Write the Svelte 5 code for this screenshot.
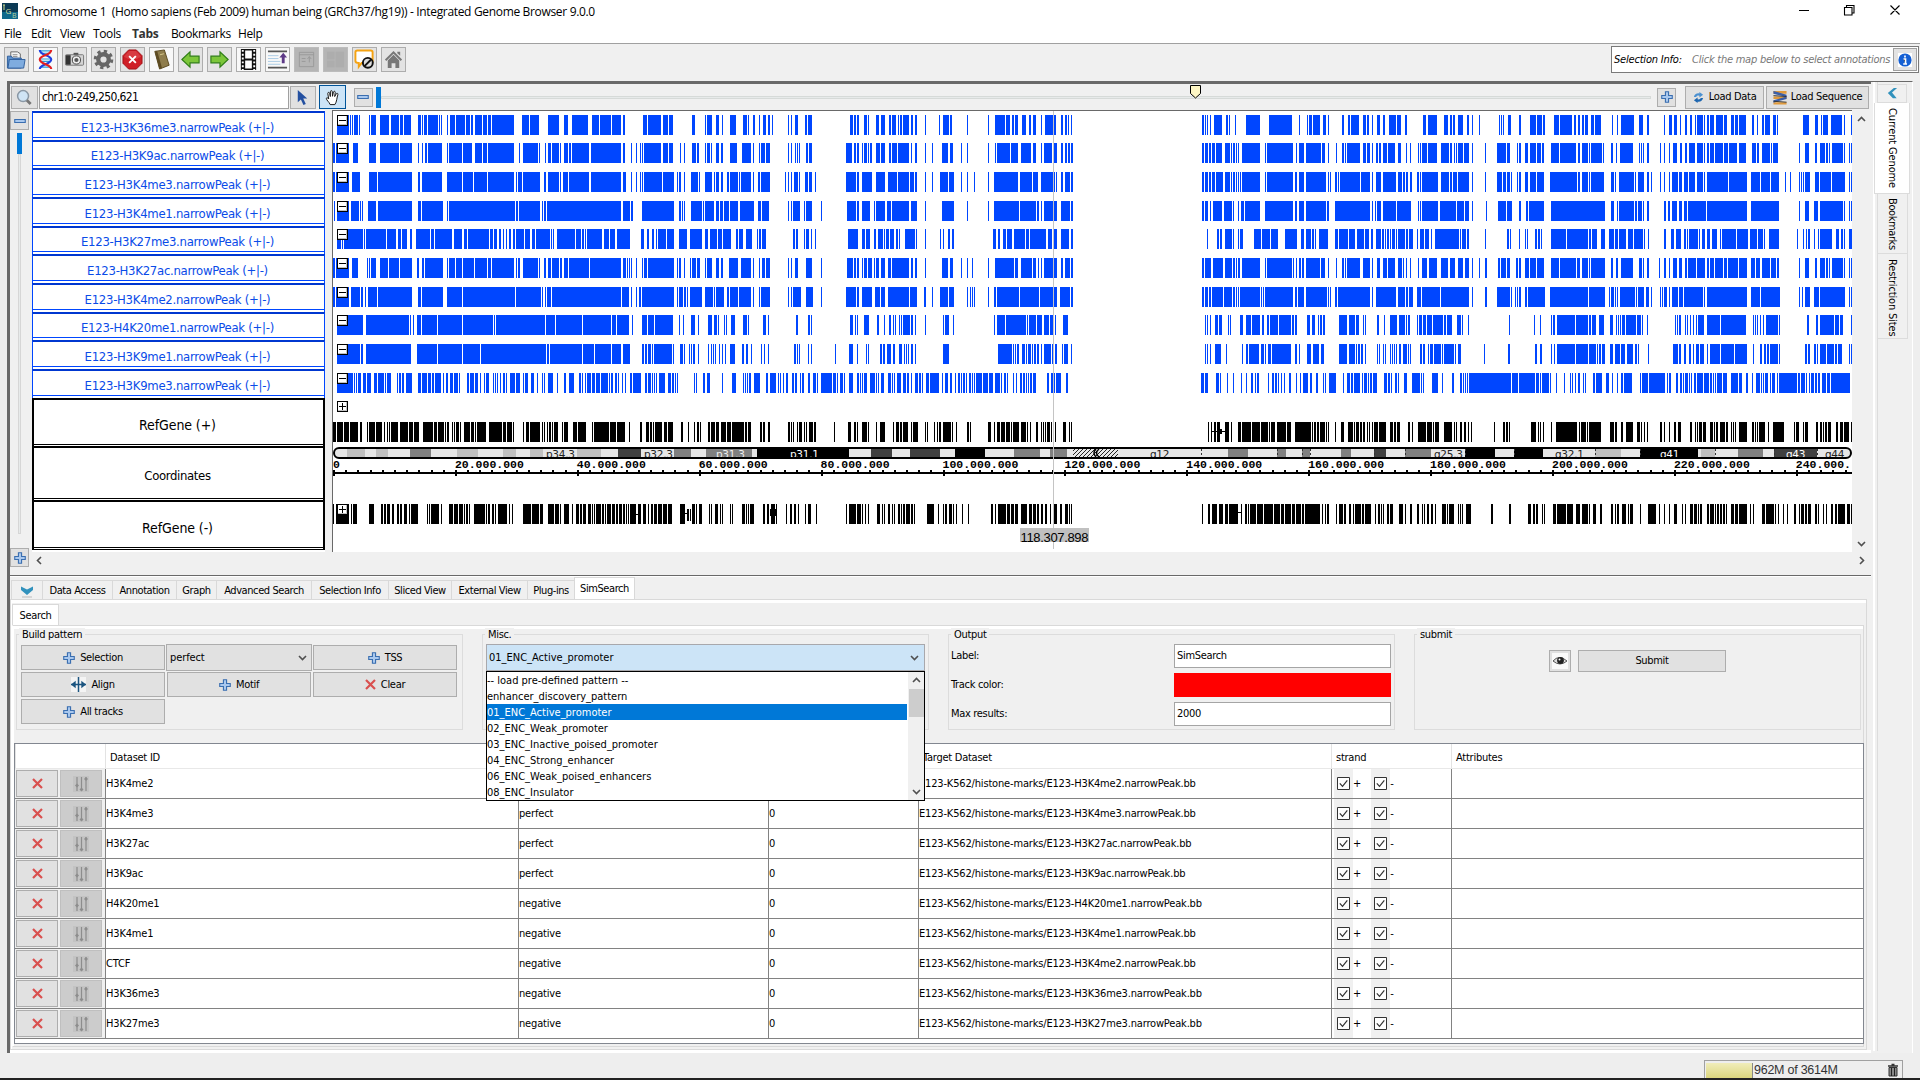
<script>
  // Peak positions: each segment is [origin px, "start end start end ..."] in thirds of a pixel.
  const tracks = [
    { name: 'E123-H3K36me3.narrowPeak (+|-)', y: 115, segs: [
      [320, '51 87 90 93 96 99 102 114 117 120 147 150 153 168 180 207 213 237 240 249 252 273 294 303 306 309 312 321 324 354 357 360 363 366 381 384 390 405 408 435 438 450 453 459 465 486 489 501 504 513 516 582 606 627 630 657 684 717 732 744 756 804 816 837 840 873 876 903 909 915 969 981 984 1023 1029 1044 1047 1059 1116 1125 1155 1158 1161 1176 1188 1197'],
      [700, '66 69 90 108 129 141 144 147 159 165 177 180 189 198 204 210 216 219 264 267 273 276 285 294 315 321 324 336 450 459 462 468 471 477 492 501 504 507 528 537 543 555 567 573 576 588 594 597 600 606 609 627 633 639 645 651 675 678 717 720 729 747 750 756 801 804 864 867 885 915 918 930 936 942 945 954 966 978 987 993 999 1008 1023 1026 1035 1068 1083 1089 1095 1101 1104 1107 1113 1116'],
      [1180, '66 72 75 78 81 84 90 93 102 126 138 144 147 150 165 168 198 240 267 336 357 360 381 384 387 396 399 420 429 438 444 447 486 492 504 510 513 537 549 558 561 567 576 579 591 600 609 615 627 648 651 663 675 681 729 738 744 771 792 804 810 816 819 825 834 849 861 867 876 879 897 900 957 960 963 966 969 972 984 993 1017 1023 1050 1068 1071 1086 1089 1095 1122 1137 1140 1176 1182 1188 1194 1200'],
      [1540, '126 132 135 144 153 162 165 183 216 219 231 234 243 282 297 309 321 327 372 375 387 396 402 411 420 423 435 441 450 456 465 468 471 489 492 495 501 507 510 522 528 549 552 561 573 582 585 594 597 618 636 642 651 654 666 672 675 690 699 708 711 714 789 807 825 834 843 846 849 864 873 906 912 915 933 936']] },
    { name: 'E123-H3K9ac.narrowPeak (+|-)', y: 143, segs: [
      [320, '39 45 48 87 99 114 147 168 180 237 240 276 294 297 306 309 315 321 324 366 381 384 387 426 429 456 465 486 489 501 504 582 597 600 609 654 657 660 675 678 684 693 696 717 720 723 732 744 747 753 756 807 813 903 909 915 933 936 948 951 960 963 966 969 972 1023 1029 1044 1047 1059 1080 1083 1092 1095 1116 1128 1131 1137 1155 1158 1161 1170 1173 1176 1188 1197'],
      [700, '63 69 90 111 126 153 159 162 177 180 183 195 198 210 264 267 273 276 285 288 291 294 297 300 318 324 327 336 438 456 462 468 471 477 486 489 492 501 504 507 510 516 528 540 543 555 567 573 576 591 594 627 633 636 645 651 675 678 696 699 726 744 750 759 783 786 801 804 864 867 885 888 891 930 933 954 963 993 999 1008 1023 1026 1032 1056 1062 1071 1083 1089 1095 1101 1104 1110 1113 1119'],
      [1180, '66 72 75 84 87 93 96 105 108 126 135 150 153 156 159 165 168 171 174 177 186 240 255 258 261 339 348 351 357 372 378 423 426 435 444 447 468 471 486 492 495 498 501 540 549 558 561 570 576 579 588 594 597 603 609 621 624 645 654 663 678 681 690 693 714 717 720 723 726 741 744 771 783 807 810 816 822 825 828 831 834 849 852 867 876 879 915 918 951 978 981 990 1011 1014 1017 1023 1035 1044 1050 1068 1071 1083 1086 1092 1113 1137 1140 1188 1194 1200'],
      [1540, '126 144 147 150 153 186 189 192 213 219 228 231 240 279 297 300 303 306 309 312 321 327 360 363 372 375 387 390 399 411 420 426 435 441 447 465 471 489 492 495 501 507 510 522 525 549 552 564 567 591 597 618 636 648 651 657 666 690 693 696 699 714 777 780 795 807 825 831 840 855 858 864 867 870 876 909 912 915 927 930 933 936']] },
    { name: 'E123-H3K4me3.narrowPeak (+|-)', y: 172, segs: [
      [320, '39 45 48 87 96 120 147 171 174 276 294 300 306 366 381 426 429 459 462 501 504 582 588 591 594 606 609 660 672 678 684 717 720 723 729 744 747 807 813 903 909 918 933 936 948 951 960 963 966 969 972 1026 1029 1062 1071 1074 1077 1083 1092 1095 1113 1134 1137 1140 1155 1176 1182 1185 1188 1197'],
      [700, '63 69 81 87 90 114 117 120 123 153 159 162 174 180 183 210 255 258 264 267 273 276 282 294 297 300 315 324 327 336 345 348 438 468 471 477 486 516 528 555 564 591 594 627 630 642 645 651 675 678 696 699 720 744 747 762 783 786 801 804 822 825 864 867 882 954 960 996 999 1014 1023 1065 1068 1071 1083 1089 1095 1110 1113 1119'],
      [1180, '66 72 75 84 87 93 96 105 108 129 135 150 153 156 159 165 168 171 174 177 180 183 186 240 255 258 261 339 345 351 357 372 378 438 444 447 450 453 465 471 474 477 480 540 543 570 576 579 588 603 609 648 654 666 669 675 678 684 690 696 711 717 720 723 726 774 783 807 810 816 819 831 834 867 876 879 915 918 951 966 969 978 981 990 993 996 1011 1014 1017 1023 1035 1044 1050 1068 1071 1092 1110 1191 1194 1200'],
      [1540, '126 144 147 150 153 192 213 222 225 228 237 282 285 288 294 312 321 327 333 336 360 363 372 375 387 390 396 414 417 426 432 444 447 465 471 489 492 495 501 564 567 621 633 660 663 690 693 717 735 738 750 753 777 780 783 786 789 792 795 810 825 837 840 873 876 915 927 930 933 936']] },
    { name: 'E123-H3K4me1.narrowPeak (+|-)', y: 201, segs: [
      [320, '42 45 51 87 93 117 120 123 126 129 144 168 174 276 294 303 306 369 381 384 387 585 588 594 597 660 666 669 672 678 681 903 909 930 933 939 966 1062 1077 1083 1086 1089 1092 1095 1113 1146 1149 1152 1155 1182 1188 1197'],
      [700, '60 69 72 87 90 114 120 162 174 183 186 207 264 267 273 276 279 300 312 315 318 336 363 366 441 468 471 477 486 510 522 525 528 555 561 573 576 627 633 651 675 678 726 762 801 804 864 867 882 957 960 1008 1011 1017 1023 1026 1032 1071 1083 1110 1113 1119'],
      [1180, '66 72 75 84 90 93 99 126 132 156 159 162 174 177 183 192 195 240 255 339 345 351 357 372 378 438 441 447 465 570 576 579 585 588 591 603 609 648 651 693 714 717 720 723 726 774 780 828 831 852 855 867 876 879 918 921 954 978 981 996 1017 1023 1038 1044 1047 1092 1113 1200'],
      [1540, '120 195 213 222 231 234 237 282 285 291 294 306 309 312 321 327 372 378 384 390 396 411 417 426 432 441 444 498 501 621 633 717 777 780 795 807 822 834 840 909 912 915 927 930 933 936']] },
    { name: 'E123-H3K27me3.narrowPeak (+|-)', y: 229, segs: [
      [320, '51 63 66 69 72 129 132 135 138 198 201 228 234 243 246 261 270 276 288 330 333 342 345 396 402 426 432 441 444 507 510 519 522 531 537 543 549 552 558 561 567 573 579 585 588 612 615 630 636 645 648 690 693 696 699 702 711 765 768 783 786 792 795 798 801 846 852 867 870 885 891 930 963 972 981 987 996 1002 1008 1011 1014 1038 1041 1062 1077 1101 1110 1146 1155 1164 1170 1191 1194 1200'],
      [700, '60 66 69 93 108 114 117 129 138 156 171 174 177 183 186 198 279 285 288 294 312 315 318 327 333 336 345 348 444 474 486 495 498 510 522 528 534 549 552 555 558 567 570 582 588 594 597 600 615 645 648 651 675 678 720 723 729 732 744 750 756 762 879 888 894 900 909 918 921 936 942 975 978 987 990 1038 1044 1056 1062 1071 1083 1107 1113 1119'],
      [1180, '81 84 111 117 120 126 135 156 159 162 174 177 180 189 222 243 246 270 273 294 315 351 363 372 378 393 396 402 405 408 417 444 465 474 477 504 507 525 531 552 555 567 573 579 588 603 606 612 615 618 621 627 630 633 636 645 648 651 654 675 678 684 687 699 711 714 720 732 735 747 753 756 765 837 840 843 846 858 861 867 915 918 981 987 990 993 1017 1020 1035 1038 1041 1044 1065 1071 1074 1080 1083 1086 1113 1158 1161 1200'],
      [1540, '120 144 147 153 156 171 183 195 207 222 225 234 237 258 264 279 282 309 312 315 324 327 372 378 393 402 408 423 432 438 441 444 447 474 477 480 486 495 501 510 516 531 540 543 546 588 591 624 630 651 654 669 672 675 687 717 771 774 789 792 798 801 804 810 822 825 834 837 840 876 888 897 903 909 912 915 927 936']] },
    { name: 'E123-H3K27ac.narrowPeak (+|-)', y: 258, segs: [
      [320, '39 45 48 87 96 114 141 144 147 150 153 168 180 204 207 237 240 276 291 297 306 312 315 369 381 384 387 405 408 426 429 462 465 501 504 513 516 582 588 591 594 600 609 654 657 660 672 678 684 693 696 717 720 726 732 744 747 807 810 903 909 918 921 924 927 930 933 936 948 951 966 969 972 981 984 1062 1071 1074 1077 1083 1092 1095 1110 1113 1116 1128 1131 1140 1155 1158 1161 1176 1188 1197'],
      [700, '63 69 87 114 123 153 159 162 177 180 186 195 198 210 264 267 273 276 285 294 318 336 363 366 441 459 462 468 471 477 486 489 492 501 504 516 522 525 528 537 543 555 564 573 576 627 633 639 645 651 675 678 726 744 750 759 783 786 801 804 816 819 864 867 885 942 945 954 963 996 999 1008 1014 1017 1023 1026 1032 1071 1083 1089 1095 1110 1113 1119'],
      [1180, '66 72 75 93 99 129 135 156 159 165 168 171 174 180 186 240 255 258 261 336 339 342 348 351 357 363 366 372 378 420 423 435 444 447 468 471 486 492 495 498 501 540 549 570 576 579 591 600 609 621 624 645 654 666 669 672 678 681 690 693 714 717 726 741 747 771 783 804 810 825 834 849 855 867 876 879 897 900 915 921 954 960 963 978 981 990 1008 1014 1017 1023 1035 1047 1050 1068 1071 1092 1113 1137 1140 1188 1191 1200'],
      [1540, '126 144 147 150 153 195 213 219 228 234 243 279 297 306 309 312 321 327 357 360 372 378 387 390 399 411 417 426 435 441 444 468 471 495 501 507 510 522 525 549 552 561 564 594 597 621 633 645 648 660 666 690 693 708 711 717 777 780 795 807 825 831 840 855 858 864 867 870 876 909 912 915 927 930 933 936']] },
    { name: 'E123-H3K4me2.narrowPeak (+|-)', y: 287, segs: [
      [320, '39 45 48 87 93 120 123 129 135 138 144 171 174 276 294 303 306 369 381 426 429 585 588 663 666 669 675 678 681 693 696 903 906 927 933 936 948 951 957 963 966 1062 1071 1074 1077 1089 1092 1098 1101 1104 1110 1146 1155 1179 1182 1185 1188 1200'],
      [700, '60 72 81 87 90 114 117 153 159 162 177 180 183 210 264 267 273 276 279 303 318 339 363 366 438 468 471 477 486 516 525 540 543 555 564 627 630 651 672 678 696 699 720 744 747 762 801 804 810 813 816 819 822 825 864 867 882 888 891 957 960 1017 1020 1071 1080 1110 1113 1119'],
      [1180, '66 72 75 84 87 93 96 129 132 156 159 165 168 171 174 177 180 240 243 246 249 252 255 339 345 351 354 372 378 441 444 447 450 453 465 471 474 570 576 579 588 648 654 675 678 684 687 699 711 723 726 780 783 867 876 879 915 921 951 990 993 996 1005 1008 1011 1014 1017 1023 1035 1041 1044 1095 1110 1200'],
      [1540, '120 144 147 195 207 210 213 222 225 228 231 234 240 285 288 291 294 312 318 327 333 336 360 363 366 369 372 381 387 390 396 414 417 429 432 489 492 495 501 621 633 660 663 720 777 780 786 789 795 810 822 837 840 915 927 930 933 936']] },
    { name: 'E123-H4K20me1.narrowPeak (+|-)', y: 315, segs: [
      [320, '51 129 138 267 270 273 279 282 291 303 306 351 354 426 429 519 522 525 528 675 678 705 708 786 789 873 876 888 891 927 936 939 966 981 984 1002 1005 1059 1077 1080 1089 1092 1113 1125 1134 1137 1164 1176 1182 1191 1194 1197'],
      [700, '72 75 78 81 93 105 129 141 144 147 189 198 204 207 288 294 324 330 333 336 450 459 465 468 471 474 492 507 531 537 552 555 567 573 579 582 585 588 597 600 603 606 609 630 633 639 645 648 675 678 729 732 735 747 759 762 882 885 891 915 918 978 981 984 987 1008 1011 1026 1032 1047 1050 1062 1065 1068 1089 1104'],
      [1180, '75 78 81 84 90 93 105 114 117 126 144 147 150 153 180 189 198 213 216 240 246 252 261 267 270 294 297 333 336 342 345 351 381 390 396 405 414 417 420 426 429 435 477 501 507 525 528 537 549 552 555 558 591 597 612 615 630 651 657 675 678 681 684 690 711 714 717 726 729 738 741 756 759 789 792 798 801 816 831 843 846 849 864 867 987 990 1062 1065 1080 1083 1113 1116 1119 1125 1131 1185 1188 1200'],
      [1540, '120 144 147 153 156 168 177 192 210 219 228 231 234 237 240 243 246 255 258 288 291 303 306 309 321 324 405 408 411 414 417 423 435 438 441 444 450 453 459 462 468 471 474 492 501 540 543 618 639 642 645 648 651 654 660 663 669 672 678 714 717 720 801 807 828 834 840 882 885 897 900 909 933 936']] },
    { name: 'E123-H3K9me1.narrowPeak (+|-)', y: 344, segs: [
      [320, '51 120 123 129 138 273 291 351 354 426 429 480 483 678 681 687 690 786 789 822 825 873 876 903 909 930 966 972 975 981 984 993 996 999 1002 1056 1059 1062 1080 1089 1092 1095 1107 1110 1113 1116 1119 1125 1134 1137 1164 1167 1173 1176 1179 1182 1185 1188 1197 1200'],
      [700, '66 69 75 78 90 105 126 132 138 144 153 156 183 186 192 195 204 207 282 288 291 294 297 300 324 327 333 336 405 408 447 459 471 474 498 501 504 507 540 546 549 555 561 573 579 585 597 606 612 615 618 621 624 627 633 639 645 648 729 747 894 936 939 942 945 948 951 957 966 975 978 981 984 993 996 999 1002 1008 1011 1017 1023 1026 1032 1053 1056 1062 1065 1071 1086 1089 1092 1104 1113 1116'],
      [1180, '75 78 81 84 90 93 105 123 138 141 186 189 198 204 207 237 243 252 255 258 264 273 276 333 345 351 357 360 381 393 399 417 423 432 477 501 507 525 528 531 534 540 543 549 555 558 591 594 597 600 609 612 615 618 630 633 636 639 642 645 648 651 657 663 669 681 684 687 690 693 720 726 729 735 744 747 750 759 762 783 786 789 792 822 825 828 834 843 912 915 984 990 1065 1071 1080 1086 1113 1116 1122 1125 1131 1185 1188 1200'],
      [1540, '120 144 147 168 171 174 177 183 186 195 210 219 225 240 243 255 261 279 285 291 294 297 324 327 399 414 417 423 432 438 447 453 459 462 468 477 480 492 501 504 510 540 543 582 585 621 639 642 660 666 672 678 681 687 690 714 717 720 795 801 804 810 822 828 831 834 840 858 861 882 885 891 894 906 927 930 933 936']] },
    { name: 'E123-H3K9me3.narrowPeak (+|-)', y: 373, segs: [
      [320, '51 99 102 105 108 111 114 123 129 138 141 153 162 171 174 192 195 198 201 213 231 234 237 243 246 252 258 276 294 303 306 321 324 333 336 342 345 363 369 372 378 384 390 399 402 414 417 420 441 447 450 462 465 474 480 483 492 495 498 507 519 522 525 528 531 534 540 543 549 555 558 561 570 585 588 600 609 612 615 624 633 642 651 654 666 669 672 675 684 699 711 714 732 738 747 762 777 783 786 789 795 798 801 813 816 825 828 840 843 864 867 870 873 879 885 891 894 897 906 909 915 918 930 936 939 963 975 981 984 993 996 999 1002 1005 1008 1011 1017 1035 1044 1053 1056 1062 1065 1068 1071 1074 1122 1125 1128 1131 1149 1155 1161 1170'],
      [700, '66 69 96 108 129 132 135 138 141 144 147 153 162 180 198 204 210 228 234 237 240 243 249 252 258 264 276 282 285 291 300 303 306 312 324 330 339 348 351 354 363 396 399 408 411 414 420 429 432 435 447 459 471 477 480 483 486 489 492 501 510 525 528 531 534 537 543 552 564 573 576 579 582 585 591 603 609 618 621 627 633 636 645 654 657 663 666 669 678 687 690 717 726 729 735 744 750 756 765 768 774 780 783 786 789 795 798 801 807 813 816 819 822 825 828 846 849 864 867 879 885 900 903 906 912 918 921 924 939 942 948 951 960 966 969 975 978 981 984 987 990 996 999 1008 1041 1047 1053 1065 1068 1083 1098 1104'],
      [1180, '63 72 75 84 108 117 120 123 141 144 159 162 183 186 198 201 213 219 225 228 231 237 264 267 276 282 285 291 294 297 303 306 312 315 327 333 348 351 360 363 369 384 390 396 408 414 429 432 435 438 447 468 489 492 501 510 513 519 522 540 546 549 552 561 564 567 570 576 579 591 612 621 624 630 633 636 645 651 654 657 672 681 696 720 723 726 729 732 756 774 786 789 816 822 840 846 849 852 855 858 861 864 867 993 996 1014 1017 1065 1068 1077 1080 1083 1086 1107 1110 1113 1128 1131 1152 1155 1170 1173 1176 1179 1185 1188 1194 1200'],
      [1540, '129 132 135 138 159 165 168 186 198 207 216 219 231 234 243 249 252 276 300 303 306 324 327 375 381 384 387 393 408 414 420 426 429 432 435 444 447 450 453 456 462 468 471 489 492 507 510 516 519 522 525 528 531 546 549 561 573 594 597 606 618 624 636 639 648 660 663 666 669 672 675 684 690 693 696 705 711 714 717 771 774 780 783 795 798 801 807 810 813 822 825 831 834 840 846 858 861 870 873 930']] }
  ];

  const genes = [
    { y: 422, segs: [
      [320, '39 48 51 69 72 87 90 114 120 126 141 144 147 165 168 186 192 195 201 204 207 210 213 234 240 264 267 279 282 297 309 339 342 351 354 372 375 378 381 387 396 399 402 405 408 417 420 423 432 450 453 462 465 468 471 498 507 546 549 558 561 576 579 582 609 612 618 627 630 660 666 669 672 675 681 684 687 693 696 699 702 714 726 729 732 744 759 771 774 798 816 819 822 867 870 888 891 915 927 930 960 966 978 987 990 996 999 1002 1005 1026 1032 1041 1044 1059 1083 1089 1104 1107 1122 1125 1131 1137 1140 1143 1164 1170 1173 1185 1188 1197'],
      [700, '63 78 81 93 96 132 135 141 144 153 180 186 189 195 204 210 264 270 273 276 279 282 291 294 297 306 312 315 318 321 327 339 342 348 402 405 444 453 462 468 471 474 486 501 504 507 528 531 540 555 579 582 588 597 600 606 609 624 633 636 639 654 675 678 681 684 702 705 711 714 717 723 729 753 756 759 768 771 801 807 810 813 864 873 882 885 891 900 903 915 918 930 933 936 939 957 963 978 981 984 990 993 1008 1014 1023 1026 1029 1032 1035 1038 1041 1050 1053 1056 1065 1068 1089 1098 1107 1110 1113 1116'],
      [1180, '84 87 93 96 102 108 111 120 135 147 153 156 174 183 186 213 216 240 243 264 267 270 273 285 291 318 321 333 345 393 396 399 402 408 411 417 420 435 438 441 444 447 465 468 483 492 504 519 522 525 528 537 540 546 549 555 561 564 567 570 576 579 582 594 597 618 630 639 642 648 651 660 684 690 696 699 714 738 741 756 759 762 765 777 792 816 822 825 828 831 840 846 852 858 864 867 873 876 942 945 969 975 978 984 987 990 1053 1068 1074 1077 1080 1083 1089 1092 1113 1116 1128 1191 1197 1200'],
      [1540, '123 138 141 144 147 183 210 222 225 231 243 249 258 279 291 300 303 306 312 315 321 324 360 366 372 375 387 390 402 408 414 423 450 456 465 468 471 474 477 486 489 498 510 519 522 525 528 534 540 555 558 564 573 576 579 582 585 588 597 621 636 642 645 648 651 654 657 675 684 687 699 732 762 765 768 777 789 792 795 804 828 834 840 846 849 852 855 861 864 873 888 894 900 909 912 927 933 936']] },
    { y: 504, segs: [
      [320, '39 42 48 87 93 96 99 111 147 162 183 189 192 198 201 210 216 222 231 237 240 246 252 261 267 270 273 294 321 324 327 330 333 357 363 366 387 399 402 414 417 429 432 435 438 444 447 450 462 495 498 501 504 510 516 522 525 528 534 561 567 570 576 579 609 633 636 657 660 669 684 702 705 717 720 723 732 747 756 759 768 777 780 786 789 798 804 813 816 819 822 825 828 843 846 852 855 858 861 873 876 885 888 894 897 906 909 915 918 921 924 927 930 948 954 963 969 978 984 987 993 999 1002 1011 1014 1026 1029 1041 1044 1056 1080 1095 1116 1125 1128 1131 1137 1146 1167 1170 1173 1176 1185 1194'],
      [700, '60 63 66 69 90 93 96 99 126 135 138 141 144 147 150 162 189 195 201 207 213 225 228 231 258 261 270 276 282 288 294 297 315 318 324 333 348 351 438 441 447 468 471 483 486 489 495 498 504 507 531 540 546 549 552 555 564 570 576 579 582 585 594 600 603 606 609 615 618 630 633 639 642 645 681 702 714 717 729 732 735 741 747 756 759 762 768 771 786 789 804 807 873 879 885 888 894 918 921 930 933 942 945 954 963 981 987 996 999 1008 1011 1017 1023 1029 1035 1041 1050 1053 1062 1071 1080 1086 1095 1104 1107 1110 1113 1116'],
      [1180, '66 69 84 90 96 111 117 129 135 144 147 174 183 186 195 201 204 207 210 228 231 249 252 279 282 300 303 312 315 333 336 345 348 363 366 372 375 420 426 429 435 438 441 447 468 471 477 489 492 498 507 513 519 522 525 543 546 552 555 573 585 588 594 600 603 606 609 612 621 627 630 639 657 669 675 678 690 696 711 717 726 729 732 735 741 747 753 759 765 768 786 798 801 804 807 822 834 837 840 843 846 849 858 873 933 939 987 993 1044 1053 1059 1065 1068 1074 1086 1089 1092 1095 1119 1128 1131 1158 1161 1179 1188 1200'],
      [1540, '126 144 147 150 159 168 180 186 213 219 225 228 231 237 246 258 264 267 270 279 300 303 324 348 357 360 372 375 387 390 402 411 426 429 435 438 450 459 462 471 474 477 480 486 501 507 510 522 525 528 531 537 540 546 549 555 558 561 573 582 585 594 597 621 630 633 639 642 666 675 678 702 705 708 714 717 729 732 741 744 762 768 777 780 783 792 795 801 804 813 825 831 834 837 849 852 858 861 873 879 885 891 894 915 921 930 933 936']] }
  ];

  function bars(segs, y) {
    let d = '';
    for (const [origin, list] of segs) {
      const n = list.split(' ').map(Number);
      for (let i = 0; i < n.length; i += 2) {
        const w = (n[i + 1] - n[i]) / 3;
        d += `M${origin + n[i] / 3} ${y}h${w}v20h${-w}z`;
      }
    }
    return d;
  }

  // Chromosome bands: [x, width, fill]
  const bands = [
    [347, 18, '#c0c0c0'], [376, 12, '#c0c0c0'], [410, 21, '#808080'], [457, 21, '#c0c0c0'], [503, 13, '#c0c0c0'],
    [530, 13, '#c0c0c0'], [577, 24, '#c0c0c0'], [618, 23, '#404040'], [674, 17, '#808080'], [706, 46, '#808080'],
    [757, 92, '#000'], [871, 21, '#404040'], [910, 30, '#404040'], [955, 30, '#000'], [1014, 26, '#808080'],
    [1050, 17, '#808080'], [1228, 20, '#808080'], [1277, 9, '#808080'], [1302, 8, '#808080'], [1341, 10, '#808080'],
    [1374, 12, '#404040'], [1405, 26, '#808080'], [1465, 30, '#000'], [1514, 29, '#000'], [1595, 26, '#c0c0c0'],
    [1640, 58, '#000'], [1701, 14, '#c0c0c0'], [1738, 25, '#808080'], [1774, 43, '#404040']
  ];
  const bandLabels = [
    ['p34.3', 546, '#222'], ['p32.3', 644, '#222'], ['p31.3', 716, '#eee'], ['p31.1', 790, '#fff'], ['q12', 1150, '#222'],
    ['q25.3', 1434, '#222'], ['q32.1', 1555, '#222'], ['q41', 1660, '#fff'], ['q43', 1786, '#fff'], ['q44', 1825, '#222']
  ];
  const bandMarks = [1201, 1277, 1302, 1310, 1374, 1405, 1465, 1514, 1595, 1640, 1715, 1774, 1817];
  const perTwoM = 12.19;
  const ticks = Array.from({ length: 125 }, (_, i) => i).filter((i) => 334 + i * perTwoM < 1851);
  const majors = Array.from({ length: 13 }, (_, i) => ({
    x: 334 + i * 121.9,
    t: i === 0 ? '0' : i === 12 ? '240.000.' : i * 20 + '.000.000'
  }));

  const menus = [['File', 27], ['Edit', 29], ['View', 33], ['Tools', 39], ['Tabs', 39], ['Bookmarks', 67], ['Help', 30]];
  const tools = ['open', 'dna', 'camera', 'gear', 'stop', 'book', 'back', 'forward', 'film', 'export', 'window', 'panel', 'mute', 'home'];
  const tabs = [['Data Access', 70], ['Annotation', 64], ['Graph', 40], ['Advanced Search', 95], ['Selection Info', 77], ['Sliced View', 63], ['External View', 76], ['Plug-ins', 47]];
  const options = ['-- load pre-defined pattern --', 'enhancer_discovery_pattern', '01_ENC_Active_promoter', '02_ENC_Weak_promoter', '03_ENC_Inactive_poised_promoter', '04_ENC_Strong_enhancer', '06_ENC_Weak_poised_enhancers', '08_ENC_Insulator'];
  // The open list covers the mode and offset cells of the first row, so they stay empty.
  const rows = [
    ['H3K4me2', '', '', 'H3K4me2'], ['H3K4me3', 'perfect', '0', 'H3K4me3'], ['H3K27ac', 'perfect', '0', 'H3K27ac'],
    ['H3K9ac', 'perfect', '0', 'H3K9ac'], ['H4K20me1', 'negative', '0', 'H4K20me1'], ['H3K4me1', 'negative', '0', 'H3K4me1'],
    ['CTCF', 'negative', '0', 'H3K4me2'], ['H3K36me3', 'negative', '0', 'H3K36me3'], ['H3K27me3', 'negative', '0', 'H3K27me3']
  ];
</script>

{#snippet plus()}
  <svg class="i13" viewBox="0 0 13 13"><path d="M4.8 .8h3.4v4h4v3.4h-4v4H4.8v-4h-4V4.8h4z" fill="#a9c8ee" stroke="#3a6eb0" stroke-width="1.2" /></svg>
{/snippet}
{#snippet minus()}
  <svg class="i13" viewBox="0 0 13 13"><path d="M.8 4.8h11.4v3.4H.8z" fill="#a9c8ee" stroke="#3a6eb0" stroke-width="1.2" /></svg>
{/snippet}
{#snippet cross()}
  <svg class="i11" viewBox="0 0 11 11"><path d="M1 1l9 9M10 1L1 10" stroke="#d9504f" stroke-width="2.2" /></svg>
{/snippet}
{#snippet chevron(cls)}
  <svg class="chev {cls}" viewBox="0 0 9 9"><path d="M1 3l3.5 3.5L8 3" fill="none" stroke="#505050" stroke-width="1.6" /></svg>
{/snippet}
{#snippet check()}
  <svg class="check" viewBox="0 0 13 13"><path d="M.5 .5h12v12H.5z" fill="#fff" stroke="#333" /><path d="M2.8 6.4l2.7 2.9 4.8-6" fill="none" stroke="#333" stroke-width="1.2" /></svg>
{/snippet}

<div class="window">
  <header class="title">
    <svg class="logo" viewBox="0 0 16 16"><rect width="16" height="16" fill="#0b3a55" /><path d="M0 9h16v7H0z" fill="#10698c" /><path d="M2 2v5M1 2h2" stroke="#cfd98c" /><text x="3.5" y="10.5" font-size="8" fill="#d5dc9a">G</text><text x="10" y="14.5" font-size="7" fill="#b9d2a0">B</text></svg>
    <span class="caption">Chromosome 1&nbsp; (Homo sapiens (Feb 2009) human being (GRCh37/hg19)) - Integrated Genome Browser 9.0.0</span>
    <svg class="winbtns" viewBox="0 0 102 12"><path d="M0 6.5h10M45.500 3.500h7.500v7.500h-7.500zM47.500 3.500v-2h7.500v7.500h-2M91.500 1.500l9 9M100.500 1.500l-9 9" fill="none" stroke="#000" stroke-width="1.100" /></svg>
  </header>
  <nav class="menu">
    {#each menus as [m, w]}<span style="width:{w}px" class:bold={m === 'Tabs'}>{m}</span>{/each}
  </nav>

  <div class="toolbar">
    <div class="tools">
      {#each tools as t}
        <button class="tool" class:dim={t === 'window' || t === 'panel'} class:pale={['dna', 'book', 'film', 'export'].includes(t)} aria-label={t}>
          <svg viewBox="0 0 22 22">
            {#if t === 'open'}
              <path d="M5 9V3h7l3 2v5" fill="#f4f4f4" stroke="#666" /><path d="M7 6h5M7 8h5" stroke="#888" /><path d="M1.500 20V7.500h4l1.500 2h9V20z" fill="#5d8fcb" stroke="#2f5e9c" /><path d="M2 20l1.500-9h16.500L18.500 20z" fill="#7facdf" stroke="#2f5e9c" />
            {:else if t === 'dna'}
              <path d="M5 2h12M6 4.500h10M6 10.500h10M6 13h9M5 19h12" stroke="#2a9bd8" stroke-width="1.200" /><path d="M5 1c0 6 12 5 12 10S5 16 5 21" fill="none" stroke="#1f3fe0" stroke-width="2.200" /><path d="M17 1c0 6-12 5-12 10s12 5 12 10" fill="none" stroke="#e52020" stroke-width="2.200" />
            {:else if t === 'camera'}
              <rect x="1.500" y="6" width="19" height="11" rx="1" fill="#d4d4d4" stroke="#777" /><path d="M2 6.500h5v10H2z" fill="#333" /><rect x="10" y="4" width="5" height="2" fill="#555" /><circle cx="13" cy="11.500" r="4.300" fill="#eee" stroke="#444" /><circle cx="13" cy="11.500" r="2.200" fill="#555" />
            {:else if t === 'gear'}
              <circle cx="11" cy="11" r="5.500" fill="none" stroke="#666" stroke-width="4.500" /><circle cx="11" cy="11" r="8.500" fill="none" stroke="#666" stroke-width="3.500" stroke-dasharray="3.340 3.340" />
            {:else if t === 'stop'}
              <path d="M7 1h8l6 6v8l-6 6H7l-6-6V7z" fill="#cf1f27" stroke="#a11016" /><path d="M2 8Q11 14 20 8L14.500 2h-7z" fill="#e2575c" opacity=".5" /><path d="M7.500 7.500l7 7M14.500 7.500l-7 7" stroke="#fff" stroke-width="2" />
            {:else if t === 'book'}
              <path d="M4 2.500l10-1.500 5 16-10 4z" fill="#8f7d4c" stroke="#5a4920" /><path d="M4 2.500l2.500-.5L11.500 20 9 21z" fill="#5d4b22" /><path d="M9.500 6l4-1" stroke="#d8c98c" />
            {:else if t === 'back'}
              <path d="M2 11l8.500-8v4.500H20v7h-9.500V19z" fill="#7cc63a" stroke="#2e7d16" stroke-width="1.200" />
            {:else if t === 'forward'}
              <path d="M20 11l-8.500-8v4.500H2v7h9.500V19z" fill="#7cc63a" stroke="#2e7d16" stroke-width="1.200" />
            {:else if t === 'film'}
              <path d="M3 0h16v22H3z" fill="#111" /><path d="M7.500 1.500h7v8.500h-7zM7.500 12h7v8.500h-7z" fill="#fff" /><path d="M5 1v21M17 1v21" stroke="#fff" stroke-width="2" stroke-dasharray="2 2" />
            {:else if t === 'export'}
              <path d="M1 2.500h20M1 19.500h20" stroke="#555" stroke-width="2" /><path d="M1 7h11M1 10h11M1 13h13M1 16h13" stroke="#a9cbe4" /><path d="M17 4l4 5h-2.500v6h-3V9H13z" fill="#5e3a87" />
            {:else if t === 'window'}
              <path d="M3.500 3.500h15v15h-15zM3.500 6h15" fill="none" stroke="#999" /><path d="M14 8v6M12 10.500L14 8l2 2.500M6 10h4M6 13h4" fill="none" stroke="#999" />
            {:else if t === 'panel'}
              <path d="M2 3h8v8H2zM11 3h9v16h-9zM2 12h8v7H2z" fill="#adadad" />
            {:else if t === 'mute'}
              <path d="M1.500 3.500q0-2 2-2h14q2 0 2 2v9q0 2-2 2H8l-3 4v-4q-3.500 0-3.500-2z" fill="#fff" stroke="#f5a312" stroke-width="2" /><circle cx="14.500" cy="14.500" r="5.200" fill="#ddd" stroke="#111" stroke-width="2" /><path d="M11 18l7-7" stroke="#111" stroke-width="2" />
            {:else}
              <path d="M11 2l9 9-1.500 1.500L11 5l-7.500 7.500L2 11zM15 3h3v4l-3-2.500zM5 12l6-6 6 6v8h-4v-5H9v5H5z" fill="#777" />
            {/if}
          </svg>
        </button>
      {/each}
    </div>
    <div class="selinfo">
      <i class="lead">Selection Info:</i><i class="hint">Click the map below to select annotations</i>
      <span class="infobtn"><svg viewBox="0 0 14 14"><circle cx="7" cy="7" r="6.600" fill="#1560d4" /><path d="M7 2.500v2M5.500 6h2v5M5.200 11h3.800" stroke="#fff" stroke-width="1.700" /></svg></span>
    </div>
  </div>

  <div class="body">
    <main class="main">
      <div class="maptools">
        <span class="btn b-search"><svg viewBox="0 0 18 18"><circle cx="7.500" cy="7.500" r="5.800" fill="#cfe4f5" stroke="#8a98a5" stroke-width="1.600" /><path d="M11.500 12l4 4" stroke="#777" stroke-width="3" /></svg></span>
        <span class="field loc">chr1:0-249,250,621</span>
        <span class="btn b-arrow"><svg viewBox="0 0 18 18"><path d="M4 1v13l3.300-3 2.700 6 2.500-1.200L9.800 10H14z" fill="#2450a0" /></svg></span>
        <span class="btn b-hand"><svg viewBox="0 0 18 18"><path d="M6.500 16.500c-1-3-4-4.500-4-6.500 0-1.200 1.700-.8 2.500.6L4 4.800c-.2-1.500 1.700-1.600 2-.3L6.700 8 6.800 2.800c0-1.400 1.900-1.400 2 0L9 7.700l1-4.500c.4-1.300 2.100-.9 1.900.4L11.300 8l1.700-3c.8-1.100 2.200-.2 1.700 1-1.200 3-1 7.500-3.200 10.500z" fill="#fff" stroke="#111" /></svg></span>
        <span class="btn b-sq b-minus">{@render minus()}</span>
        <span class="hthumb"></span>
        <span class="htrack"><svg class="pin" viewBox="0 0 11 14"><path d="M.5 .5h10v8L5.500 13 .5 8.500z" fill="#fdf6c4" stroke="#000" /></svg></span>
        <span class="btn b-sq">{@render plus()}</span>
        <span class="btn b-load"><svg viewBox="0 0 12 12"><path d="M1 5.500Q2 1 7 1.500V0l4 3-4 3V4Q4 3.500 3.500 5.500z" fill="#4b90d0" /><path d="M11 6.500Q10 11 5 10.500V12L1 9l4-3v2q3 .5 3.500-1.500z" fill="#1d66b0" /></svg>Load Data</span>
        <span class="btn b-seq"><svg viewBox="0 0 14 16"><path d="M0 1h14v3H0zM0 7h14v2.500H0zM0 13h14v2.500H0z" fill="#e09a3c" /><path d="M0 1l14 4v2.500L0 4zM14 7L0 11v2.500l14-4z" fill="#3c5fa8" /><path d="M0 6l14 1M0 12l14 1" stroke="#333" /></svg>Load Sequence</span>
      </div>

      <div class="upper">
        <div class="vzoom">
          <span class="btn b-sq">{@render minus()}</span>
          <span class="vthumb"></span><span class="vtrack"></span>
          <span class="btn b-sq">{@render plus()}</span>
        </div>
        <div class="mapcol">
          <div class="maprow">
            <div class="labels">
              {#each tracks as t}<div class="lab"><span>{t.name}</span></div>{/each}
              <div class="lab g g1"><span>RefGene (+)</span></div>
              <div class="lab g g2"><span>Coordinates</span></div>
              <div class="lab g g3"><span>RefGene (-)</span></div>
            </div>
            <div class="map">
              <svg class="canvas" viewBox="333 111 1519 441">
                <defs>
                  <pattern id="hatch" width="4" height="4" patternUnits="userSpaceOnUse"><rect width="4" height="4" fill="#e6e6e6" /><path d="M-1 5L5-1M-1 1L1-1M3 5L5 3" stroke="#222" /></pattern>
                  <clipPath id="bandclip"><rect x="333" y="447" width="1519" height="10" /></clipPath>
                </defs>
                <g class="crisp">
                  {#each tracks as t}
                    <path d={bars(t.segs, t.y)} fill="#0046ff" />
                  {/each}
                  {#each genes as g}
                    <path d={bars(g.segs, g.y)} fill="#000" />
                  {/each}
                  {#each [...tracks.map((t) => t.y), 401, 504] as y, i}
                    <rect x="337" {y} width="11" height="11" fill="#000" />
                    <rect x="338" y={y + 1} width="9" height="9" fill="#c0c0c0" />
                    <rect x="338" y={y + 1} width="8" height="8" fill="#fff" />
                    <rect x="339" y={y + 5} width="7" height="1" fill="#000" />
                    {#if i > 9}<rect x="342" y={y + 2} width="1" height="7" fill="#000" />{/if}
                  {/each}
                  <path d="M687 509h2v12h-2zM690 509h1v12h-1zM685 513h4v1h-4zM770 509h6v7h-6zM636 514h2v1h-2zM1212 431h14v1h-14zM1220 429h2v5h-2zM1237 512h4v1h-4z" fill="#000" />
                </g>
                <rect x="334" y="448" width="1517" height="10" rx="5" fill="#e6e6e6" />
                <g class="crisp">
                  {#each bands as [x, w, f]}<rect {x} y="449" width={w} height="8" fill={f} />{/each}
                  <rect x="1073" y="449" width="45" height="8" fill="url(#hatch)" />
                  {#each bandMarks as x}<path d="M{x + .5} 449v8" stroke="#333" stroke-dasharray="2 2" />{/each}
                </g>
                <rect x="334" y="448" width="1517" height="10" rx="5" fill="none" stroke="#000" stroke-width="2" />
                <path d="M1096 449q-4 4 0 8M1099 449q-5 4 0 8" fill="none" stroke="#000" stroke-width="1.500" />
                <g clip-path="url(#bandclip)" class="bandtext">
                  {#each bandLabels as [t, x, f]}<text {x} y="457.500" fill={f}>{t}</text>{/each}
                </g>
                <g class="crisp">
                  <path d="M333 472h1519v2H333z" />
                  {#each ticks as i}<rect x={333 + i * perTwoM} y="470" width="2" height="2" />{/each}
                  {#each majors as m}<rect x={m.x - 1} y="470" width="2" height="6" />{/each}
                </g>
                <g class="coords">
                  {#each majors as m}<text x={m.x - 1} y="468">{m.t}</text>{/each}
                </g>
                <path d="M1053.500 111v438" stroke="#c4c4c4" />
                <rect x="1020" y="528" width="69" height="14" fill="#c0c0c0" />
                <text class="pos" x="1020.500" y="542" textLength="68">118.307.898</text>
              </svg>
            </div>
            <div class="vscroll">{@render chevron('up')}{@render chevron('')}</div>
          </div>
          <div class="hscroll">{@render chevron('left')}{@render chevron('right')}</div>
        </div>
      </div>

      <section class="lower">
        <div class="tabs">
          <span class="tab collapse"><svg viewBox="0 0 14 14"><path d="M1 2.500l6 3 6-3v3.500L7 11 1 6z" fill="#3292bd" /><path d="M2 13h10" stroke="#bbb" /></svg></span>
          {#each tabs as [t, w]}<span class="tab" style="width:{w}px">{t}</span>{/each}
          <span class="tab active">SimSearch</span>
        </div>
        <div class="pane">
          <div class="subtabs"><span>Search</span></div>
          <div class="inner">
            <div class="forms">
              <div class="fs build">
                <span class="legend">Build pattern</span>
                <div class="grid">
                  <span class="btn">{@render plus()}Selection</span>
                  <span class="btn combo">perfect{@render chevron('')}</span>
                  <span class="btn">{@render plus()}TSS</span>
                  <span class="btn"><svg class="align" viewBox="0 0 16 16"><rect width="16" height="16" fill="#f4f4f4" /><path d="M8 0v16M0 8h16" stroke="#1c5580" stroke-width="1.600" /><path d="M5 4v8L0 8zM11 4v8l5-4z" fill="#1c5580" /></svg>Align</span>
                  <span class="btn">{@render plus()}Motif</span>
                  <span class="btn">{@render cross()}Clear</span>
                  <span class="btn">{@render plus()}All tracks</span>
                </div>
              </div>
              <div class="fs misc">
                <span class="legend">Misc.</span>
                <div class="select">01_ENC_Active_promoter{@render chevron('')}</div>
                <div class="popup">
                  <div class="opts">{#each options as o, i}<div class:sel={i === 2}>{o}</div>{/each}</div>
                  <div class="oscroll">{@render chevron('up')}<i></i>{@render chevron('last')}</div>
                </div>
              </div>
              <div class="fs output">
                <span class="legend">Output</span>
                <div class="orow"><span>Label:</span><span class="field">SimSearch</span></div>
                <div class="orow"><span>Track color:</span><span class="red"></span></div>
                <div class="orow"><span>Max results:</span><span class="field">2000</span></div>
              </div>
              <div class="fs submit">
                <span class="legend">submit</span>
                <div class="srow">
                  <span class="btn eye"><svg viewBox="0 0 16 16"><rect width="16" height="16" fill="#fafafa" /><path d="M1 8q6-7 14 0-7 6-14 0z" fill="#ddd" stroke="#555" /><circle cx="8.500" cy="7.500" r="3.400" fill="#222" /><circle cx="7.500" cy="6.500" r="1" fill="#fff" /></svg></span>
                  <span class="btn go">Submit</span>
                </div>
              </div>
            </div>

            <div class="table">
              <div class="tr head">
                <span></span><span>Dataset ID</span><span></span><span></span><span>Target Dataset</span><span>strand</span><span>Attributes</span>
              </div>
              {#each rows as [id, mode, offset, target]}
                <div class="tr">
                  <span class="acts">
                    <b class="btn">{@render cross()}</b>
                    <b class="btn off"><svg viewBox="0 0 16 16"><rect width="16" height="16" fill="#c3c3c3" /><path d="M4 1v14M8.500 1v14M13 1v14" stroke="#8d8d8d" stroke-width="1.200" /><path d="M2 9.500l2-2 2 2-2 2zM6.500 13.500l2-2 2 2-2 2zM11 3l2-2 2 2-2 2z" fill="#8d8d8d" /></svg></b>
                  </span>
                  <span>{id}</span><span>{mode}</span><span>{offset}</span><span>E123-K562/histone-marks/E123-{target}.narrowPeak.bb</span>
                  <span class="strand"><em>{@render check()}</em>+<em class="second">{@render check()}</em>-</span>
                  <span></span>
                </div>
              {/each}
            </div>
          </div>
        </div>
      </section>
    </main>

    <aside class="side">
      <div class="stabs">
        <span class="open"><svg viewBox="0 0 12 14"><path d="M8 1h3.500L6 6l5 6H7L1.500 6.500z" fill="#3292bd" /></svg></span>
        <span class="vt on">Current Genome</span>
        <span class="vt bm">Bookmarks</span>
        <span class="vt rs">Restriction Sites</span>
      </div>
    </aside>
  </div>

  <footer class="status">
    <div class="mem"><i></i><span>962M of 3614M</span>
      <svg viewBox="0 0 12 14"><path d="M4.500 1.500h3M1 3h10" stroke="#333" stroke-width="1.500" /><path d="M2 4.500h8V13H2z" fill="#888" stroke="#333" /><path d="M4.500 5v8M7.500 5v8" stroke="#222" /></svg>
    </div>
  </footer>
</div>

<style>
  :global(body) { background: #eee; overflow: hidden; }
  .window, .window * { box-sizing: border-box; }
  .window { width: 1920px; height: 1080px; display: flex; flex-direction: column; background: #eee; color: #000; font: 11px/14px "DejaVu Sans Condensed", "DejaVu Sans", sans-serif; font-stretch: condensed; letter-spacing: -.32px; white-space: nowrap; overflow: hidden; }
  svg { display: block; flex: none; }
  .crisp { shape-rendering: crispEdges; }

  .title { height: 24px; background: #fff; display: flex; align-items: center; padding: 0 19px 0 2px; font: 12px/16px "Open Sans", sans-serif; letter-spacing: -.33px; }
  .logo { width: 16px; height: 16px; margin: 0 6px 2px 0; }
  .caption { flex: 1; }
  .winbtns { width: 102px; height: 12px; margin-bottom: 4px; }
  .menu { height: 20px; background: #fff; display: flex; align-items: center; padding-left: 4px; border-bottom: 1px solid #a0a0a0; font: 12px/16px "Open Sans", sans-serif; letter-spacing: -.38px; }
  .bold { font-weight: 700; color: #333; }

  .toolbar { height: 37px; display: flex; justify-content: space-between; align-items: flex-start; padding: 2px 1px 0 4px; background: #f0f0f0; }
  .tools { display: flex; gap: 4px; padding-top: 1px; }
  .tool { width: 25px; height: 25px; padding: 0; border: 1px solid #adadad; background: #e3e3e3; display: flex; align-items: center; justify-content: center; }
  .tool svg { width: 21px; height: 21px; }
  .tool.dim { background: #b5b5b5; border-color: #bcbcbc; }
  .tool.pale { background: #f8f8f8; }
  .selinfo { width: 308px; height: 27px; border: 1px solid #7a7a7a; background: #fff; display: flex; align-items: center; padding-left: 2px; font-size: 11px; }
  .lead { width: 78px; letter-spacing: -.2px; }
  .hint { color: #777; flex: 1; letter-spacing: -.24px; }
  .infobtn { width: 24px; height: 23px; margin-right: 1px; border: 1px solid #a0a0a0; background: #e3e3e3; display: flex; align-items: center; justify-content: center; }
  .infobtn svg { width: 14px; height: 14px; background: #fff; }

  .body { height: 972px; display: flex; padding-left: 7px; }
  .main { width: 1864px; border-top: 3px solid #696969; border-left: 3px solid #696969; display: flex; flex-direction: column; background: #f0f0f0; }
  .btn { display: flex; align-items: center; justify-content: center; gap: 5px; border: 1px solid #adadad; background: #e1e1e1; font-weight: normal; }
  .i13 { width: 12px; height: 12px; }
  .i11 { width: 11px; height: 11px; }
  .chev { width: 9px; height: 9px; }
  .up { transform: rotate(180deg); }
  .left { transform: rotate(90deg); }
  .right { transform: rotate(-90deg); }
  .last { margin-top: auto; }
  .field { border: 1px solid #7a7a7a; background: #fff; display: flex; align-items: center; padding-left: 2px; }

  .maptools { height: 26px; flex: none; display: flex; align-items: center; padding: 0 2px 0 1px; }
  .b-search { width: 27px; height: 23px; margin-right: 1px; }
  .b-search svg, .b-arrow svg, .b-hand svg { width: 17px; height: 17px; }
  .loc { width: 250px; height: 23px; border-color: #a0a0a0; font-size: 12px; letter-spacing: -.6px; margin-right: 1px; }
  .b-arrow { width: 26px; height: 23px; margin-right: 3px; }
  .b-hand { width: 27px; height: 24px; background: #cce4f7; border-color: #005499; margin-right: 8px; }
  .b-sq { width: 19px; height: 19px; flex: none; }
  .b-minus { margin-right: 3px; }
  .hthumb { width: 5px; height: 21px; background: #0078d7; }
  .htrack { width: 1271px; height: 3px; border: 1px solid #d6dad8; background: #e7eaea; margin-right: 6px; position: relative; }
  .pin { position: absolute; left: 808px; top: -12px; width: 11px; height: 14px; }
  .b-load { width: 79px; height: 23px; margin: 0 2px 0 9px; }
  .b-load svg { width: 11px; height: 11px; }
  .b-seq { width: 103px; height: 23px; gap: 4px; }
  .b-seq svg { width: 14px; height: 15px; }

  .upper { height: 465px; flex: none; display: flex; border-bottom: 7px solid #f0f0f0; }
  .vzoom { width: 22px; padding: 1px 0 1px 0; display: flex; flex-direction: column; }
  .vthumb { width: 5px; height: 21px; flex: none; margin: 3px 0 0 7px; background: #0078d7; }
  .vtrack { width: 3px; flex: 1; margin: 0 0 14px 8px; border: 1px solid #d6d6d6; background: #e7eaea; }
  .mapcol { flex: 1; display: flex; flex-direction: column; }
  .maprow { height: 442px; flex: none; display: flex; }
  .labels { width: 293px; margin-right: 7px; padding-top: 1px; background: #fff; }
  .lab { height: 28.67px; border: 1px solid #0046ff; border-top: 2px solid #0037d0; border-bottom: 0; box-shadow: inset 0 -2px 0 #fff, inset 0 -3px 0 #0046ff; display: flex; align-items: center; justify-content: center; color: #0a4be8; font-size: 13px; padding: 3px 2px 0 0; letter-spacing: -.28px; }
  .lab.g { border: 2px solid #000; border-bottom: 0; box-shadow: inset 0 -1px 0 #fff, inset 0 -2px 0 #000; color: #000; padding-top: 5px; letter-spacing: -.35px; }
  .lab.g1 { height: 48px; font-size: 14px; letter-spacing: -.1px; }
  .lab.g2 { height: 54px; }
  .lab.g3 { height: 50px; border-bottom: 1px solid #000; font-size: 14px; letter-spacing: -.1px; }
  .map { width: 1520px; border-top: 1px solid #696969; border-left: 1px solid #696969; background: #fff; overflow: hidden; }
  .canvas { width: 1519px; height: 441px; }
  .bandtext { font: 10.5px "DejaVu Sans", sans-serif; letter-spacing: -.3px; }
  .coords { font: bold 11.5px "Liberation Mono", monospace; letter-spacing: 0; }
  .pos { font: 13px "Liberation Sans", sans-serif; letter-spacing: 0; }
  .vscroll { width: 16px; margin-left: 1px; display: flex; flex-direction: column; justify-content: space-between; align-items: center; padding: 5px 0 4px; }
  .hscroll { height: 16px; display: flex; justify-content: space-between; align-items: center; padding: 0 5px 0 3px; }

  .lower { flex: 1; border-top: 1px solid #696969; display: flex; flex-direction: column; padding: 1px 4px 0 0; border-bottom: 3px solid #fff; background: #f0f0f0; box-shadow: inset 0 1px 0 #fff; }
  .tabs { height: 23px; display: flex; align-items: flex-end; padding-left: 1px; margin-bottom: -1px; }
  .tab { height: 20px; border: 1px solid #d9d9d9; border-right: 0; display: flex; align-items: center; justify-content: center; letter-spacing: -.42px; padding-top: 1px; }
  .collapse { width: 31px; }
  .collapse svg { width: 14px; height: 14px; }
  .tab.active { width: 61px; height: 23px; border: 1px solid #d9d9d9; border-bottom: 0; background: #fff; padding: 0; }
  .pane { flex: 1; border: 1px solid #d9d9d9; border-top: 1px solid #d9d9d9; box-shadow: inset 1px 3px 0 #fff; padding: 4px 2px 2px 1px; display: flex; flex-direction: column; }
  .subtabs { height: 21px; display: flex; }
  .subtabs span { width: 47px; height: 22px; background: #fff; border: 1px solid #d9d9d9; border-bottom: 0; display: flex; align-items: center; justify-content: center; }
  .inner { flex: 1; border: 1px solid #d9d9d9; border-left-color: #fff; box-shadow: inset 1px 3px 0 #fff; padding: 8px 1px 2px; }
  .forms { height: 109px; display: flex; padding-left: 2px; }
  .fs { position: relative; width: 447px; height: 96px; border: 1px solid #dcdcdc; margin-right: 19px; }
  .submit { margin-right: 0; }
  .legend { position: absolute; left: 2px; top: -7px; padding: 0 3px; background: #f0f0f0; }
  .grid { display: grid; grid-template-columns: 144px 144px 144px; grid-auto-rows: 25px; gap: 2px; padding: 10px 0 0 4px; }
  .combo { justify-content: space-between; padding: 0 4px 0 3px; margin: -1px; letter-spacing: -.1px; }
  .align { width: 15px; height: 15px; }
  .select { width: 439px; height: 27px; margin: 9px 0 0 3px; background: #cce4f7; border: 1px solid #a8a8ac; display: flex; align-items: center; justify-content: space-between; padding: 0 5px 0 2px; letter-spacing: 0; }
  .popup { position: absolute; z-index: 2; left: 3px; top: 36px; width: 439px; height: 130px; border: 1px solid #000; background: #fff; display: flex; letter-spacing: 0; }
  .opts { flex: 1; }
  .opts div { height: 16px; line-height: 17px; width: 420px; }
  .opts .sel { background: #0078d7; color: #fff; }
  .oscroll { width: 16px; background: #f0f0f0; display: flex; flex-direction: column; align-items: center; padding: 4px 0; }
  .oscroll i { width: 15px; height: 28px; background: #cdcdcd; margin-top: 4px; }
  .output { padding: 9px 3px 0 2px; }
  .orow { display: flex; align-items: center; justify-content: space-between; height: 24px; margin-bottom: 5px; }
  .orow .field { width: 217px; height: 24px; border-color: #a5a5a5; }
  .red { width: 217px; height: 24px; background: #f00; }
  .srow { display: flex; gap: 7px; padding: 15px 0 0 134px; }
  .eye { width: 22px; height: 22px; }
  .eye svg { width: 16px; height: 16px; }
  .go { width: 148px; height: 22px; }

  .table { width: 1850px; height: 301px; border: 1px solid #828790; background: #fff; }
  .tr { display: grid; grid-template-columns: 90px 413px 250px 150px 413px 120px 1fr; height: 30px; border-bottom: 1px solid #828282; letter-spacing: -.17px; }
  .tr > span { display: flex; align-items: center; border-left: 1px solid #828282; }
  .tr > span:first-child { border-left: 0; }
  .tr.head { height: 25px; border-bottom: 1px solid #e8e8e8; letter-spacing: -.25px; }
  .tr.head > span { border-left: 1px solid #e3e3e3; padding: 3px 0 0 4px; }
  .tr .acts { padding: 1px; gap: 2px; background: #f0f0f0; }
  .acts .btn { width: 42px; height: 27px; }
  .acts .off { background: #cccccc; border-color: #bfbfbf; }
  .acts svg { width: 16px; height: 16px; }
  .acts .i11 { width: 11px; height: 11px; }
  .tr .strand { padding-left: 2px; align-items: center; }
  .strand em { width: 19px; height: 29px; background: #f0f0f0; display: flex; align-items: center; justify-content: center; }
  .strand .second { margin-left: 10px; }
  .check { width: 13px; height: 13px; }

  .side { width: 42px; border-top: 1px solid #696969; border-right: 1px solid #fff; background: #f0f0f0; }
  .stabs { height: 969px; margin-left: 2px; border-left: 2px solid #fff; display: flex; flex-direction: column; align-items: flex-start; padding: 2px 0 0 2px; box-shadow: inset 2px 0 0 #f0f0f0, inset 3px 0 0 #dcdcdc; }
  .open { width: 30px; height: 19px; border: 1px solid #dcdcdc; display: flex; align-items: center; justify-content: center; }
  .open svg { width: 12px; height: 13px; }
  .vt { writing-mode: vertical-rl; width: 31px; border: 1px solid #dcdcdc; border-top: 0; display: flex; align-items: center; justify-content: center; line-height: 29px; letter-spacing: -.15px; }
  .on { width: 36px; height: 91px; margin-left: -3px; background: #fff; }
  .bm { height: 60px; letter-spacing: -.4px; padding-top: 1px; }
  .rs { height: 85px; padding-top: 3px; }

  .status { flex: 1; border-bottom: 2px solid #222; display: flex; justify-content: flex-end; padding: 7px 17px 0 0; }
  .mem { width: 199px; height: 18px; border: 1px solid #a0a0a0; border-bottom: 0; display: flex; align-items: center; padding: 1px 3px 0 1px; font: 12.5px "Liberation Sans", sans-serif; letter-spacing: -.25px; }
  .mem i { width: 47px; height: 15px; background: linear-gradient(#f0edba, #dcd67e); border-right: 1px solid #888; margin-right: 1px; }
  .mem span { flex: 1; color: #333; }
  .mem svg { width: 12px; height: 14px; }
</style>
